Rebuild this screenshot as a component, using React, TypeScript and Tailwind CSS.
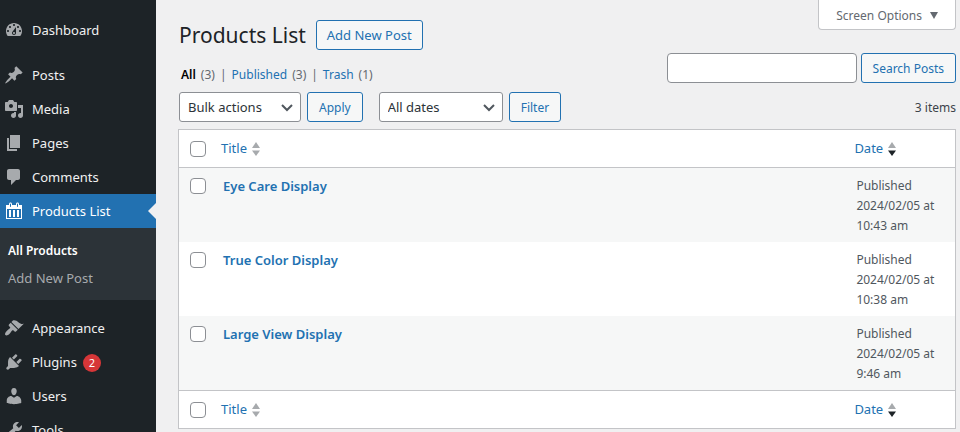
import type { ReactNode } from "react";

const icons = {
  dashboard:
    "M3.76 16h12.48c1.1-1.37 1.76-3.11 1.76-5 0-4.42-3.58-8-8-8s-8 3.58-8 8c0 1.89.66 3.63 1.76 5zM10 4c.55 0 1 .45 1 1s-.45 1-1 1-1-.45-1-1 .45-1 1-1zM6 6c.55 0 1 .45 1 1s-.45 1-1 1-1-.45-1-1 .45-1 1-1zm8 0c.55 0 1 .45 1 1s-.45 1-1 1-1-.45-1-1 .45-1 1-1zm-5.37 5.55L12 7v6c0 1.1-.9 2-2 2s-2-.9-2-2c0-.57.24-1.08.63-1.45zM4 10c.55 0 1 .45 1 1s-.45 1-1 1-1-.45-1-1 .45-1 1-1zm12 0c.55 0 1 .45 1 1s-.45 1-1 1-1-.45-1-1 .45-1 1-1zm-5 3c0-.55-.45-1-1-1s-1 .45-1 1 .45 1 1 1 1-.45 1-1z",
  posts:
    "M10.44 3.02l1.82-1.82 6.36 6.35-1.83 1.82c-1.05-.68-2.48-.57-3.41.36l-.75.75c-.92.93-1.04 2.35-.35 3.41l-1.83 1.82-2.41-2.41-2.8 2.79c-.42.42-3.38 2.71-3.8 2.29s1.86-3.39 2.28-3.81l2.79-2.79L4.1 9.36l1.83-1.82c1.05.69 2.48.57 3.4-.36l.75-.75c.93-.92 1.05-2.35.36-3.41z",
  media:
    "M13 11V4c0-.55-.45-1-1-1h-1.67L9 1H5L3.67 3H2c-.55 0-1 .45-1 1v7c0 .55.45 1 1 1h10c.55 0 1-.45 1-1zM7 5c1.1 0 2 .9 2 2s-.9 2-2 2-2-.9-2-2 .9-2 2-2zM14 6h5v10.5c0 1.38-1.12 2.5-2.5 2.5S14 17.88 14 16.5s1.12-2.5 2.5-2.5c.17 0 .34.02.5.05V9h-3V6zm-4 8.05V13h2v3.5c0 1.38-1.12 2.5-2.5 2.5S7 17.88 7 16.5 8.12 14 9.5 14c.17 0 .34.02.5.05z",
  pages: "M6 15V2h10v13H6zm-1 1h8v2H3V5h2v11z",
  comments:
    "M5 2h9c1.1 0 2 .9 2 2v7c0 1.1-.9 2-2 2h-2l-5 5v-5H5c-1.1 0-2-.9-2-2V4c0-1.1.9-2 2-2z",
  calendar:
    "M15 4h3v14H2V4h3V3c0-.83.67-1.5 1.5-1.5S8 2.17 8 3v1h4V3c0-.83.67-1.5 1.5-1.5S15 2.17 15 3v1zM6 3v2.5c0 .28.22.5.5.5s.5-.22.5-.5V3c0-.28-.22-.5-.5-.5S6 2.72 6 3zm7 0v2.5c0 .28.22.5.5.5s.5-.22.5-.5V3c0-.28-.22-.5-.5-.5s-.5.22-.5.5zm4 14V8H3v9h14zM7 16V9H5v7h2zm4 0V9H9v7h2zm4 0V9h-2v7h2z",
  appearance:
    "M14.48 11.06L7.41 3.99l1.5-1.5c.5-.56 2.3-.47 3.51.32 1.21.8 1.43 1.28 2.91 2.1 1.18.64 2.45 1.26 4.45.85zm-.71.71L6.7 4.7 4.93 6.47c-.39.39-.39 1.02 0 1.41l1.06 1.06c.39.39.39 1.03 0 1.42-.6.6-1.43 1.11-2.21 1.69-.35.26-.7.53-1.01.84C1.43 14.23.4 16.08 1.4 17.07c.99 1 2.84-.03 4.18-1.36.31-.31.58-.66.85-1.02.57-.78 1.08-1.61 1.69-2.21.39-.39 1.02-.39 1.41 0l1.06 1.06c.39.39 1.02.39 1.41 0z",
  plugins:
    "M13.11 4.36L9.87 7.6 8 5.73l3.24-3.24c.35-.34 1.05-.2 1.56.32.52.51.66 1.21.31 1.55zm-8 1.77l.91-1.12 9.01 9.01-1.19.84c-.71.71-2.63 1.16-3.82 1.16H6.14L4.9 17.26c-.59.59-1.54.59-2.12 0-.59-.58-.59-1.53 0-2.12l1.24-1.24v-3.88c0-1.13.4-3.19 1.09-3.89zm7.26 3.97l3.24-3.24c.34-.35 1.04-.21 1.55.31.52.51.66 1.21.31 1.55l-3.24 3.25z",
  users:
    "M10 9.25c-2.27 0-2.73-3.44-2.73-3.44C7 4.02 7.82 2 9.97 2c2.16 0 2.98 2.02 2.71 3.81 0 0-.41 3.44-2.68 3.44zm0 2.57L12.72 10c2.39 0 4.52 2.33 4.52 4.53v2.49s-3.65 1.13-7.24 1.13c-3.65 0-7.24-1.13-7.24-1.13v-2.49c0-2.25 1.94-4.48 4.47-4.48z",
  tools:
    "M16.68 9.77c-1.34 1.34-3.3 1.67-4.95.99l-5.41 6.52c-.99.99-2.59.99-3.58 0s-.99-2.59 0-3.57l6.52-5.42c-.68-1.65-.35-3.61.99-4.95 1.28-1.28 3.12-1.62 4.72-1.06l-2.89 2.89 2.82 2.82 2.86-2.87c.53 1.58.18 3.39-1.08 4.65zM3.81 16.21c.4.39 1.04.39 1.43 0 .4-.4.4-1.04 0-1.43-.39-.4-1.03-.4-1.43 0-.39.39-.39 1.03 0 1.43z",
};

type IconName = keyof typeof icons;

function MenuItem({
  icon,
  label,
  count,
  current = false,
  children,
}: {
  icon: IconName;
  label: string;
  count?: number;
  current?: boolean;
  children?: ReactNode;
}) {
  return (
    <li>
      <a
        href="#"
        aria-current={current ? "page" : undefined}
        className={`relative flex h-[34px] items-center pl-1 ${
          current ? "bg-[#2271b1] text-white" : "text-[#f0f0f1]"
        }`}
      >
        <svg
          viewBox="0 0 20 20"
          aria-hidden="true"
          className={`mr-2 size-5 shrink-0 ${current ? "fill-white" : "fill-[#a7aaad]"}`}
        >
          <path d={icons[icon]} />
        </svg>
        <span className="pt-0.5">{label}</span>
        {count !== undefined && (
          <span className="ml-1.5 mt-0.5 flex size-[18px] items-center justify-center rounded-full bg-[#d63638] text-[11px] text-white">
            {count}
          </span>
        )}
        {current && (
          <span className="absolute right-0 top-1/2 -translate-y-1/2 border-8 border-l-0 border-transparent border-r-[#f0f0f1]" />
        )}
      </a>
      {children}
    </li>
  );
}

function Sidebar() {
  return (
    <nav aria-label="Main menu" className="w-[156px] shrink-0 bg-[#1d2327] pt-[13px] text-[13px]">
      <ul>
        <MenuItem icon="dashboard" label="Dashboard" />
      </ul>
      <ul className="mt-[11px]">
        <MenuItem icon="posts" label="Posts" />
        <MenuItem icon="media" label="Media" />
        <MenuItem icon="pages" label="Pages" />
        <MenuItem icon="comments" label="Comments" />
        <MenuItem icon="calendar" label="Products List" current>
          <ul className="bg-[#2c3338] py-2">
            <li>
              <a href="#" className="flex h-7 items-center px-2 pt-0.5 text-[12px] font-semibold text-white">
                All Products
              </a>
            </li>
            <li>
              <a href="#" className="flex h-7 items-center px-2 pt-0.5 text-[#a7aaad]">
                Add New Post
              </a>
            </li>
          </ul>
        </MenuItem>
      </ul>
      <ul className="mt-[11px]">
        <MenuItem icon="appearance" label="Appearance" />
        <MenuItem icon="plugins" label="Plugins" count={2} />
        <MenuItem icon="users" label="Users" />
        <MenuItem icon="tools" label="Tools" />
      </ul>
    </nav>
  );
}

function Button({ children, large = false }: { children: ReactNode; large?: boolean }) {
  return (
    <button
      type="button"
      className={`flex h-[30px] items-center whitespace-nowrap rounded-[3px] border border-[#2271b1] bg-[#f6f7f7] pt-px text-[#2271b1] ${
        large ? "px-2.5 text-[13px]" : "px-[11px] text-[12px]"
      }`}
    >
      {children}
    </button>
  );
}

function Select({ label, option, width }: { label: string; option: string; width: string }) {
  return (
    <div className={`relative ${width}`}>
      <select
        aria-label={label}
        className="h-[30px] w-full appearance-none rounded-[3px] border border-[#8c8f94] bg-white pl-2 pr-6 pt-px text-[13px] text-[#2c3338]"
      >
        <option>{option}</option>
      </select>
      <svg
        viewBox="0 0 12 8"
        aria-hidden="true"
        className="pointer-events-none absolute right-2 top-3 h-2 w-3 fill-none stroke-[#50575e] stroke-2"
      >
        <path d="M1 1l5 5 5-5" />
      </svg>
    </div>
  );
}

function Checkbox({ label }: { label: string }) {
  return (
    <input
      type="checkbox"
      aria-label={label}
      className="block size-4 appearance-none rounded-[4px] border border-[#8c8f94] bg-white"
    />
  );
}

function SortLink({ label, descending = false }: { label: string; descending?: boolean }) {
  return (
    <a href="#" className="flex items-center gap-[5px] text-[#2271b1]">
      {label}
      <svg viewBox="0 0 8 14" aria-hidden="true" className="h-3.5 w-2">
        <path d="M0 6l4-6 4 6z" className="fill-[#a7aaad]" />
        <path d="M0 8.5h8l-4 5.5z" className={descending ? "fill-[#1d2327]" : "fill-[#a7aaad]"} />
      </svg>
    </a>
  );
}

function HeadingCells({ label }: { label: string }) {
  return (
    <>
      <td className="h-[38px] pl-[11px] align-middle">
        <Checkbox label={label} />
      </td>
      <th scope="col" className="pl-2 text-left font-normal">
        <SortLink label="Title" />
      </th>
      <th scope="col" className="pl-2 text-left font-normal">
        <SortLink label="Date" descending />
      </th>
    </>
  );
}

const products = [
  { title: "Eye Care Display", date: "2024/02/05 at 10:43 am" },
  { title: "True Color Display", date: "2024/02/05 at 10:38 am" },
  { title: "Large View Display", date: "2024/02/05 at 9:46 am" },
];

function ProductsTable() {
  return (
    <table className="w-full table-fixed border-separate border-spacing-0 border border-[#c3c4c7] bg-white text-[13px] [&_thead_:is(td,th)]:border-b [&_tfoot_:is(td,th)]:border-t [&_:is(td,th)]:border-[#c3c4c7]">
      <colgroup>
        <col className="w-[34px]" />
        <col />
        <col className="w-[14%]" />
      </colgroup>
      <thead>
        <tr>
          <HeadingCells label="Select all" />
        </tr>
      </thead>
      <tbody>
        {products.map((product) => (
          <tr key={product.title} className="align-top odd:bg-[#f6f7f7]">
            <td className="pl-[11px] pt-2.5">
              <Checkbox label={`Select ${product.title}`} />
            </td>
            <td className="pl-2.5 pt-2 leading-5">
              <a href="#" className="font-semibold text-[#2271b1]">
                {product.title}
              </a>
            </td>
            <td className="px-2.5 pb-1.5 pt-2 text-[12px] leading-5 text-[#50575e]">
              Published
              <br />
              {product.date}
            </td>
          </tr>
        ))}
      </tbody>
      <tfoot>
        <tr>
          <HeadingCells label="Select all, bottom" />
        </tr>
      </tfoot>
    </table>
  );
}

const statuses = [
  { label: "All", count: 3, style: "font-semibold text-black" },
  { label: "Published", count: 3, style: "text-[#2271b1]" },
  { label: "Trash", count: 1, style: "text-[#2271b1]" },
];

function StatusLinks() {
  return (
    <ul className="flex gap-[5px] px-0.5 text-[12px] leading-5 text-[#646970]">
      {statuses.map(({ label, count, style }, index) => (
        <li key={label} className="flex gap-[5px]">
          {index > 0 && <span>|</span>}
          <a href="#" className={style}>
            {label}
          </a>
          <span>({count})</span>
        </li>
      ))}
    </ul>
  );
}

export default function App() {
  return (
    <div className="flex h-screen overflow-hidden bg-[#f0f0f1] font-['Noto_Sans','Open_Sans',sans-serif] text-[13px] text-[#3c434a]">
      <Sidebar />
      <main className="min-w-0 flex-1 pl-[22px] pr-1">
        <div className="flex items-start justify-between pl-px">
          <div className="flex items-center gap-2.5 pt-5">
            <h1 className="text-[21px] leading-[30px] text-[#1d2327]">Products List</h1>
            <Button large>Add New Post</Button>
          </div>
          <button
            type="button"
            className="flex h-[30px] items-center gap-2 rounded-b-[4px] border border-t-0 border-[#c3c4c7] bg-white px-[17px] pt-0.5 text-[12px] text-[#646970]"
          >
            Screen Options
            <svg viewBox="0 0 8 7" aria-hidden="true" className="h-[7px] w-2 fill-[#646970]">
              <path d="M0 0h8L4 7z" />
            </svg>
          </button>
        </div>
        <div className="mt-[3px] flex items-start justify-between pl-px">
          <div className="pt-3">
            <StatusLinks />
          </div>
          <div className="flex gap-1">
            <input
              type="search"
              aria-label="Search Posts"
              className="h-[30px] w-[190px] rounded-[4px] border border-[#8c8f94] bg-white px-2"
            />
            <Button>Search Posts</Button>
          </div>
        </div>
        <div className="mb-[7px] mt-[7px] flex items-center pl-px">
          <div className="flex gap-1.5">
            <Select label="Bulk actions" option="Bulk actions" width="w-[122px]" />
            <Button>Apply</Button>
          </div>
          <div className="ml-4 flex gap-1.5">
            <Select label="Filter by date" option="All dates" width="w-[124px]" />
            <Button>Filter</Button>
          </div>
          <span className="ml-auto pt-0.5 text-[12px]">3 items</span>
        </div>
        <ProductsTable />
      </main>
    </div>
  );
}
